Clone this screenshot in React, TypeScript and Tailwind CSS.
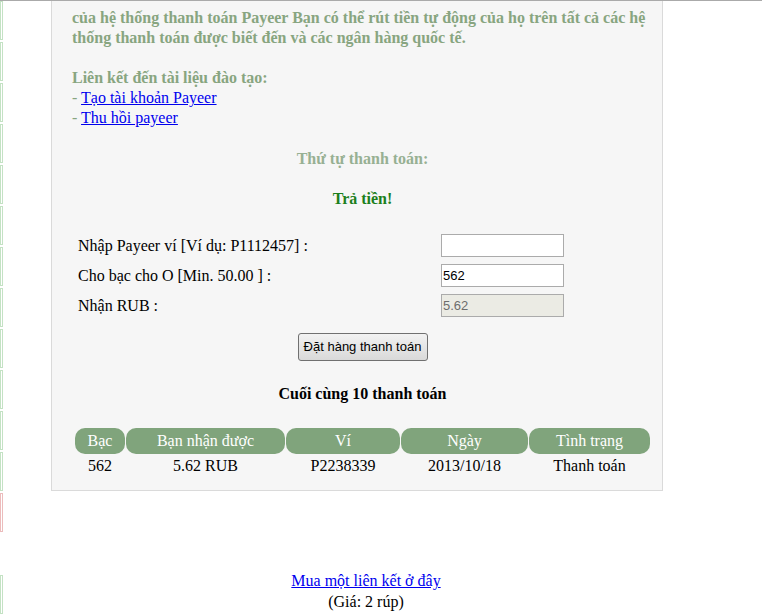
import React from "react";

const SIDE_BOXES = [
  "g", "g", "g", "g", "g", "g", "g", "g", "g", "g", "g", "g", "p", "", "g",
];

const COLS = [
  { head: "Bạc", value: "562" },
  { head: "Bạn nhận được", value: "5.62 RUB" },
  { head: "Ví", value: "P2238339" },
  { head: "Ngày", value: "2013/10/18" },
  { head: "Tình trạng", value: "Thanh toán" },
];

export default function App() {
  return (
    <div className="w-[762px] h-[616px] overflow-hidden bg-white border-t border-[#aaaaaa] flex font-['Liberation_Serif','Times_New_Roman',serif] text-[16px] text-black">
      {/* clipped side column */}
      <div className="w-[51px] shrink-0 flex flex-col gap-[2px]">
        {SIDE_BOXES.map((kind, i) => (
          <div
            key={i}
            className={`w-[3px] h-[39px] shrink-0 ${
              kind === "g" ? "border border-[#c4e2c4]" : kind === "p" ? "border border-[#ecbcbc]" : ""
            }`}
          />
        ))}
      </div>

      <div className="w-[612px] shrink-0 flex flex-col">
        {/* Main panel */}
        <div className="bg-[#f6f6f6] border-x border-b border-[#dadada] pt-[7px] pb-[14px]">
          <div className="pl-[20px] pr-[4px] leading-[20px]">
            <p className="font-bold text-[#88a580]">
              của hệ thống thanh toán Payeer Bạn có thể rút tiền tự động của họ trên tất cả các hệ thống thanh toán được biết đến và các ngân hàng quốc tế.
            </p>
            <p className="font-bold text-[#88a580] mt-[20px]">Liên kết đến tài liệu đào tạo:</p>
            <div className="text-[#88a580]">
              - <a href="#" className="text-[#0000ee] underline">Tạo tài khoản Payeer</a>
            </div>
            <div className="text-[#88a580]">
              - <a href="#" className="text-[#0000ee] underline">Thu hồi payeer</a>
            </div>
          </div>

          <div className="ml-[23px] w-[575px]">
            <div className="mt-[21px] text-center font-bold text-[#97b093] leading-[20px]">Thứ tự thanh toán:</div>
            <div className="mt-[20px] text-center font-bold text-[#1c7f1c] leading-[20px]">Trả tiền!</div>

            {/* Form */}
            <div className="mt-[25px] flex flex-col gap-[7px]">
              <div className="flex items-center h-[23px]">
                <label className="w-[366px] pl-[3px] leading-[20px]">Nhập Payeer ví [Ví dụ: P1112457] :</label>
                <input
                  type="text"
                  className="w-[123px] h-[23px] bg-white border border-[#ababab] px-[2px] font-['Liberation_Sans',Arial,sans-serif] text-[13px] outline-none"
                />
              </div>
              <div className="flex items-center h-[23px]">
                <label className="w-[366px] pl-[3px] leading-[20px]">Cho bạc cho O [Min. 50.00 ] :</label>
                <input
                  type="text"
                  defaultValue="562"
                  className="w-[123px] h-[23px] bg-white border border-[#ababab] px-[1px] font-['Liberation_Sans',Arial,sans-serif] text-[13px] text-black outline-none"
                />
              </div>
              <div className="flex items-center h-[23px]">
                <label className="w-[366px] pl-[3px] leading-[20px]">Nhận RUB :</label>
                <input
                  type="text"
                  disabled
                  defaultValue="5.62"
                  className="w-[123px] h-[23px] bg-[#ebebe4] border border-[#ababab] px-[1px] font-['Liberation_Sans',Arial,sans-serif] text-[13px] text-[#6d6d6d] outline-none"
                />
              </div>
            </div>

            <div className="mt-[16px] flex justify-center">
              <button className="w-[130px] h-[28px] rounded-[3px] border border-[#707070] bg-gradient-to-b from-[#f2f2f2] to-[#d9d9d9] font-['Liberation_Sans',Arial,sans-serif] text-[13px] text-black">
                Đặt hàng thanh toán
              </button>
            </div>

            <div className="mt-[23px] text-center font-bold leading-[20px]">Cuối cùng 10 thanh toán</div>

            {/* Last payments */}
            <div className="mt-[24px] grid grid-cols-[50px_159px_114px_127px_121px] gap-x-px">
              {COLS.map((c) => (
                <div
                  key={c.head}
                  className="h-[26px] rounded-[10px] bg-[#80a47c] text-white text-center leading-[26px]"
                >
                  {c.head}
                </div>
              ))}
              {COLS.map((c) => (
                <div key={c.head + "v"} className="pt-[2px] text-center leading-[20px]">
                  {c.value}
                </div>
              ))}
            </div>
          </div>
        </div>

        {/* Footer */}
        <div className="mt-[79px] pl-[18px] text-center leading-[21px]">
          <a href="#" className="text-[#0000ee] underline">Mua một liên kết ở đây</a>
          <div>(Giá: 2 rúp)</div>
        </div>
      </div>
    </div>
  );
}
